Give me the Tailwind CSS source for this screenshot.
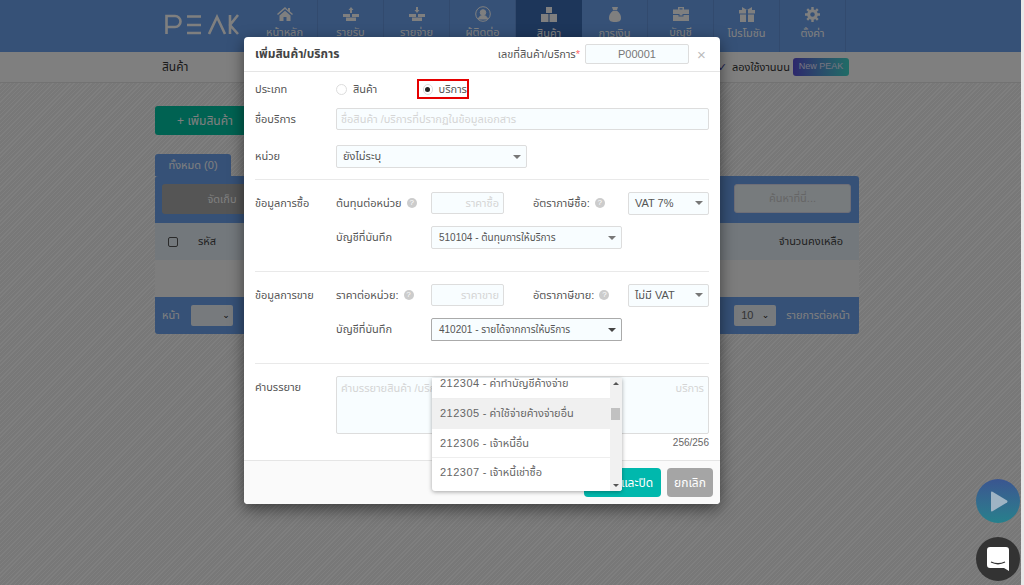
<!DOCTYPE html>
<html lang="th">
<head>
    <meta charset="UTF-8">
    <title>PEAK - เพิ่มสินค้า/บริการ</title>
    <script src="https://cdn.jsdelivr.net/npm/@tailwindcss/browser@4"></script>
</head>
<body class="font-['Liberation_Sans','Noto_Sans_Thai','DejaVu_Sans',sans-serif] text-[11px] text-[#555]">
<div class="relative w-[1024px] h-[585px] overflow-hidden bg-[repeating-linear-gradient(135deg,#ffffff_0,#ffffff_1px,#f1f1f1_1px,#f1f1f1_3px)]">

    <!-- Nav -->
    <header class="h-[52px] bg-[#6ca2ee] flex pl-[165px] text-white">
        <div class="w-[87px] pt-[14px]">
            <svg width="74" height="21" viewBox="0 0 74 21" fill="none" stroke="#ffffff" stroke-width="2.6">
                <path d="M1.5 20V2H10a5 5 0 0 1 0 11H1.5"/>
                <path d="M22 2.500H36M22 11H36M22 19H36"/>
                <path d="M44 20L52 3L60 20"/>
                <path d="M65 1V20M73 1L65 11L73 20"/>
            </svg>
        </div>
        <nav class="flex">
            <a class="w-[66px] border-r border-[#6494dc] flex flex-col items-center pt-[7px] gap-[3px]">
                <svg width="16" height="14" viewBox="0 0 16 14" fill="#fff"><path d="M8 0L0 7l1 1 7-6 7 6 1-1-3-2.600V1h-2v2zM2.500 8.500V14H6.500V10h3v4h4V8.500L8 3.800z"/></svg>
                <span>หน้าหลัก</span>
            </a>
            <a class="w-[66px] border-r border-[#6494dc] flex flex-col items-center pt-[7px] gap-[3px]">
                <svg width="16" height="14" viewBox="0 0 16 14" fill="#fff"><path d="M8 0l2.500 3H9v3H7V3H5.500zM0 7h7v3H0zM9 7h7v3H9zM3 10.500h10V14H3z"/></svg>
                <span>รายรับ</span>
            </a>
            <a class="w-[66px] border-r border-[#6494dc] flex flex-col items-center pt-[7px] gap-[3px]">
                <svg width="16" height="14" viewBox="0 0 16 14" fill="#fff"><path d="M7 0h2v3h1.500L8 6 5.500 3H7zM0 7h7v3H0zM9 7h7v3H9zM3 10.500h10V14H3z"/></svg>
                <span>รายจ่าย</span>
            </a>
            <a class="w-[66px] border-r border-[#6494dc] flex flex-col items-center pt-[6px] gap-[2px]">
                <svg width="16" height="16" viewBox="0 0 16 16" fill="none" stroke="#fff"><circle cx="8" cy="8" r="7.300"/><circle cx="8" cy="6.500" r="2.800" fill="#fff"/><path d="M3.500 13c.5-2.500 2-3.500 4.500-3.500s4 1 4.500 3.500z" fill="#fff"/></svg>
                <span>ผู้ติดต่อ</span>
            </a>
            <a class="w-[66px] bg-[#3a6cb4] flex flex-col items-center pt-[7px] gap-[3px]">
                <svg width="16" height="15" viewBox="0 0 16 15" fill="#fff"><path d="M5 0h6v6H5zM0 7h7.500v8H0zM8.500 7H16v8H8.500z"/></svg>
                <span>สินค้า</span>
            </a>
            <a class="w-[66px] border-r border-[#6494dc] flex flex-col items-center pt-[7px] gap-[3px]">
                <svg width="12" height="15" viewBox="0 0 12 15" fill="#fff"><path d="M3 0h6L8 3H4zM4 3.800h4C11 6 12 8.500 12 11c0 3-2 4-6 4s-6-1-6-4c0-2.500 1-5 4-7.200z"/></svg>
                <span>การเงิน</span>
            </a>
            <a class="w-[66px] border-r border-[#6494dc] flex flex-col items-center pt-[7px] gap-[3px]">
                <svg width="16" height="14" viewBox="0 0 16 14" fill="#fff"><path d="M5 0h6v2.500h5V7H9.500v1.500h-3V7H0V2.500h5zM6.500 1.300v1.200h3V1.300zM0 8h5.500v1.500h5V8H16v6H0z"/></svg>
                <span>บัญชี</span>
            </a>
            <a class="w-[66px] border-r border-[#6494dc] flex flex-col items-center pt-[7px] gap-[3px]">
                <svg width="16" height="15" viewBox="0 0 16 15" fill="#fff"><path d="M0 3h16v3.500H9V3H7v3.500H0zM1 7.500h6V15H1zM9 7.500h6V15H9zM3 0l5 3 5-3v3H3z"/></svg>
                <span>โปรโมชัน</span>
            </a>
            <a class="w-[66px] border-r border-[#6494dc] flex flex-col items-center pt-[7px] gap-[3px]">
                <svg width="15" height="15" viewBox="0 0 15 15" fill="none" stroke="#fff"><circle cx="7.500" cy="7.500" r="3.800" stroke-width="3"/><path d="M7.500 0v3M7.500 12v3M0 7.500h3M12 7.500h3M2.200 2.200l2 2M10.800 10.800l2 2M12.800 2.200l-2 2M4.200 10.800l-2 2" stroke-width="2.400"/></svg>
                <span>ตั้งค่า</span>
            </a>
        </nav>
    </header>

    <!-- Sub header -->
    <div class="h-[31px] bg-white border-b border-[#e5e5e5] flex items-center pl-[162px] pr-[175px] text-[#333]">
        <span class="flex-1 text-[12px]">สินค้า</span>
        <span class="text-[#3a3a9a] mr-[5px]">✓</span>
        <span class="text-[11px] mr-[3px]">ลองใช้งานบน</span>
        <span class="w-[56px] h-[18px] rounded-[3px] bg-gradient-to-r from-[#5a4fd8] to-[#3fd8cc] text-[#e8e8ff] text-[9px] flex items-center justify-center">New PEAK</span>
    </div>

    <!-- Page -->
    <main class="w-[704px] ml-[155px]">
        <button class="mt-[23px] w-[100px] h-[29px] rounded-[3px] bg-[#00c4a4] text-white text-[12px]">+ เพิ่มสินค้า</button>
        <div class="mt-[19px] w-[76px] h-[22px] rounded-t-[3px] bg-[#6ca2ee] text-white text-center text-[11px] pt-[3px]">ทั้งหมด (0)</div>
        <div class="rounded-[3px] overflow-hidden">
            <div class="h-[47px] bg-[#6ca2ee] flex items-center justify-between px-[7px] pb-[2px]">
                <div class="w-[90px] h-[30px] rounded-[3px] bg-[#aaaaaa] text-white text-center leading-[30px] pl-[30px]">จัดเก็บ</div>
                <div class="w-[117px] h-[29px] mr-[1px] rounded-[3px] bg-[#eef6fb] border border-[#dde] text-[#ccc] text-center leading-[27px]">ค้นหาที่นี่...</div>
            </div>
            <div class="h-[37px] bg-[#e6f0f8] flex items-center pl-[13px] pr-[16px] text-[#444]">
                <span class="w-[10px] h-[10px] border border-[#555] rounded-[2px] mr-[20px]"></span>
                <span>รหัส</span>
                <span class="ml-auto">จำนวนคงเหลือ</span>
            </div>
            <div class="h-[37px] bg-[#fafafa]"></div>
            <div class="h-[37px] bg-[#6ca2ee] flex items-center pl-[7px] pr-[9px] text-white">
                <span>หน้า</span>
                <span class="ml-[11px] w-[42px] h-[21px] rounded-[2px] bg-[#eef4fa] text-[#222] text-[9px] text-right pr-[3px] leading-[21px]">⌄</span>
                <span class="ml-auto w-[42px] h-[21px] rounded-[2px] bg-[#eef4fa] text-[#666] text-[11px] flex justify-between px-[7px] leading-[21px]">10<span class="text-[#222] text-[9px]">⌄</span></span>
                <span class="ml-[10px]">รายการต่อหน้า</span>
            </div>
        </div>
    </main>

    <!-- Backdrop -->
    <div class="absolute inset-0 bg-black/50"></div>
    <div class="absolute right-0 top-0 bottom-0 w-[3px] bg-[#e8e8e8]"></div>

    <!-- Floating buttons -->
    <div class="absolute left-[976px] top-[479px] w-[44px] h-[44px] rounded-full bg-gradient-to-b from-[#3a5590] to-[#26808c] flex items-center justify-center pl-[3px]">
        <svg width="17" height="21" viewBox="0 0 17 21" fill="#9fb4c4"><path d="M0 1.500Q0 0 1.500.800L16 9.500q1 1 0 2L1.500 20.200Q0 21 0 19.500z"/></svg>
    </div>
    <div class="absolute left-[976px] top-[537px] w-[44px] h-[44px] rounded-full bg-[#333] flex items-center justify-center">
        <svg width="22" height="24" viewBox="0 0 22 24"><path d="M3 0h16a3 3 0 0 1 3 3v21l-5-3H3a3 3 0 0 1-3-3V3a3 3 0 0 1 3-3z" fill="#fff"/><path d="M4 15q7 3.500 14 0" fill="none" stroke="#333" stroke-width="1.300"/></svg>
    </div>

    <!-- Modal -->
    <div class="absolute left-[244px] top-[37px] w-[476px] h-[467px] bg-white rounded-[4px] shadow-[0_5px_15px_rgba(0,0,0,0.5)] flex flex-col">
        <div class="h-[35px] shrink-0 border-b border-[#e5e5e5] flex items-center pl-[11px] pr-[13px]">
            <h4 class="flex-1 text-[12px] font-bold text-[#444]">เพิ่มสินค้า/บริการ</h4>
            <span class="text-[#555] mr-[5px]">เลขที่สินค้า/บริการ<span class="text-red-400">*</span></span>
            <div class="w-[104px] h-[20px] rounded-[2px] border border-[#ddd] bg-[#f8fdff] text-center text-[#777] leading-[18px]">P00001</div>
            <span class="ml-[8px] w-[10px] text-[#bbb] text-[15px] leading-none">×</span>
        </div>

        <div class="relative flex-1 px-[11px] text-[#555]">
            <!-- Type -->
            <div class="flex items-center h-[20px] mt-[7px]">
                <span class="w-[81px]">ประเภท</span>
                <label class="flex items-center w-[81px]">
                    <span class="w-[11px] h-[11px] rounded-full border border-[#ddd] mr-[6px]"></span>สินค้า
                </label>
                <label class="flex items-center w-[52px] h-[20px] border-2 border-[#e60000] pl-[4px]">
                    <span class="w-[11px] h-[11px] rounded-full border border-[#ddd] mr-[6px] flex items-center justify-center"><span class="w-[5px] h-[5px] rounded-full bg-[#222]"></span></span>บริการ
                </label>
            </div>
            <!-- Name -->
            <div class="flex items-center mt-[9px]">
                <span class="w-[81px]">ชื่อบริการ</span>
                <div class="w-[373px] h-[22px] border border-[#ddd] rounded-[2px] bg-[#f8fdff] text-[#d5d5d5] pl-[4px] leading-[20px]">ชื่อสินค้า /บริการที่ปรากฏในข้อมูลเอกสาร</div>
            </div>
            <!-- Unit -->
            <div class="flex items-center mt-[15px] pb-[11px] border-b border-[#e9e9e9]">
                <span class="w-[81px]">หน่วย</span>
                <div class="w-[191px] h-[23px] border border-[#ddd] rounded-[2px] bg-[#f8fdff] flex items-center justify-between pl-[6px] pr-[4px]">ยังไม่ระบุ<i class="w-0 h-0 border-x-[4px] border-t-[4px] border-x-transparent border-t-[#777] mr-[1px]"></i></div>
            </div>

            <!-- Purchase -->
            <div class="flex pt-[12px] h-[92px] border-b border-[#e9e9e9]">
                <span class="w-[81px] pt-[3px]">ข้อมูลการซื้อ</span>
                <div class="flex-1">
                    <div class="flex items-center h-[22px]">
                        <span class="w-[95px] flex items-center gap-[5px]">ต้นทุนต่อหน่วย <i class="w-[10px] h-[10px] rounded-full bg-[#ccc] text-white text-[8px] not-italic text-center leading-[10px]">?</i></span>
                        <div class="w-[73px] h-[22px] border border-[#ddd] rounded-[2px] bg-[#f8fdff] text-[#d5d5d5] text-right pr-[4px] leading-[20px]">ราคาซื้อ</div>
                        <span class="ml-[29px] w-[95px] flex items-center gap-[5px]">อัตราภาษีซื้อ: <i class="w-[10px] h-[10px] rounded-full bg-[#ccc] text-white text-[8px] not-italic text-center leading-[10px]">?</i></span>
                        <div class="w-[81px] h-[23px] border border-[#ddd] rounded-[2px] bg-[#f8fdff] flex items-center justify-between pl-[6px] pr-[4px]">VAT 7%<i class="w-0 h-0 border-x-[4px] border-t-[4px] border-x-transparent border-t-[#777] mr-[1px]"></i></div>
                    </div>
                    <div class="flex items-center mt-[12px]">
                        <span class="w-[95px]">บัญชีที่บันทึก</span>
                        <div class="w-[191px] h-[23px] border border-[#ddd] rounded-[2px] bg-[#f8fdff] flex items-center justify-between pl-[7px] pr-[4px] text-[10px]"><span>510104 - ต้นทุนการให้บริการ</span><i class="w-0 h-0 border-x-[4px] border-t-[4px] border-x-transparent border-t-[#777] mr-[1px]"></i></div>
                    </div>
                </div>
            </div>

            <!-- Sales -->
            <div class="flex pt-[12px] h-[92px] border-b border-[#e9e9e9]">
                <span class="w-[81px] pt-[3px]">ข้อมูลการขาย</span>
                <div class="flex-1">
                    <div class="flex items-center h-[22px]">
                        <span class="w-[95px] flex items-center gap-[5px]">ราคาต่อหน่วย: <i class="w-[10px] h-[10px] rounded-full bg-[#ccc] text-white text-[8px] not-italic text-center leading-[10px]">?</i></span>
                        <div class="w-[73px] h-[22px] border border-[#ddd] rounded-[2px] bg-[#f8fdff] text-[#d5d5d5] text-right pr-[4px] leading-[20px]">ราคาขาย</div>
                        <span class="ml-[29px] w-[95px] flex items-center gap-[5px]">อัตราภาษีขาย: <i class="w-[10px] h-[10px] rounded-full bg-[#ccc] text-white text-[8px] not-italic text-center leading-[10px]">?</i></span>
                        <div class="w-[81px] h-[23px] border border-[#ddd] rounded-[2px] bg-[#f8fdff] flex items-center justify-between pl-[6px] pr-[4px]">ไม่มี VAT<i class="w-0 h-0 border-x-[4px] border-t-[4px] border-x-transparent border-t-[#777] mr-[1px]"></i></div>
                    </div>
                    <div class="flex items-center mt-[12px]">
                        <span class="w-[95px]">บัญชีที่บันทึก</span>
                        <div class="w-[191px] h-[23px] border border-[#aaa] rounded-t-[2px] bg-[#f8fdff] flex items-center justify-between pl-[7px] pr-[4px] text-[10px]"><span>410201 - รายได้จากการให้บริการ</span><i class="w-0 h-0 border-x-[4px] border-t-[4px] border-x-transparent border-t-[#444] mr-[1px]"></i></div>
                    </div>
                </div>
            </div>

            <!-- Description -->
            <div class="flex pt-[12px]">
                <span class="w-[81px] pt-[3px]">คำบรรยาย</span>
                <div class="w-[373px]">
                    <div class="h-[58px] border border-[#ddd] rounded-[2px] bg-[#f8fdff] text-[#d5d5d5] pl-[4px] pt-[3px] flex justify-between pr-[4px]"><span>คำบรรยายสินค้า /บริการ</span><span>บริการ</span></div>
                    <div class="text-right text-[10px] text-[#666] mt-[1px]">256/256</div>
                </div>
            </div>

            <!-- Dropdown list -->
            <div class="absolute left-[188px] top-[306px] w-[190px] h-[113px] bg-white rounded-b-[3px] shadow-[0_1px_4px_rgba(0,0,0,0.35)] overflow-hidden flex text-[11px] text-[#666]">
                <ul class="flex-1">
                    <li class="h-[21px] border-b border-[#eee] pl-[8px] leading-[10px]"><span class="tracking-[0.5px]">212304</span> - ค่าทำบัญชีค้างจ่าย</li>
                    <li class="h-[30px] bg-[#f0f0f0] pl-[8px] leading-[29px]"><span class="tracking-[0.5px]">212305</span> - ค่าใช้จ่ายค้างจ่ายอื่น</li>
                    <li class="h-[29px] border-b border-[#eee] pl-[8px] leading-[28px]"><span class="tracking-[0.5px]">212306</span> - เจ้าหนี้อื่น</li>
                    <li class="h-[30px] pl-[8px] leading-[28px]"><span class="tracking-[0.5px]">212307</span> - เจ้าหนี้เช่าซื้อ</li>
                </ul>
                <div class="w-[12px] bg-[#f1f1f1] relative flex flex-col justify-between items-center py-[4px]">
                    <i class="w-0 h-0 border-x-[3px] border-b-[3px] border-x-transparent border-b-[#555]"></i>
                    <span class="absolute top-[30px] left-[1px] w-[9px] h-[12px] bg-[#c1c1c1]"></span>
                    <i class="w-0 h-0 border-x-[3px] border-t-[3px] border-x-transparent border-t-[#555]"></i>
                </div>
            </div>
        </div>

        <!-- Footer -->
        <div class="h-[44px] shrink-0 border-t border-[#e5e5e5] bg-[#fafafa] rounded-b-[4px] flex items-center justify-end pr-[7px] gap-[6px]">
            <button class="w-[77px] h-[29px] rounded-[4px] bg-[#00b8ad] text-white text-[12px]">บันทึกและปิด</button>
            <button class="w-[46px] h-[29px] rounded-[4px] bg-[#a5a5a5] text-white text-[12px]">ยกเลิก</button>
        </div>
    </div>
</div>
</body>
</html>
